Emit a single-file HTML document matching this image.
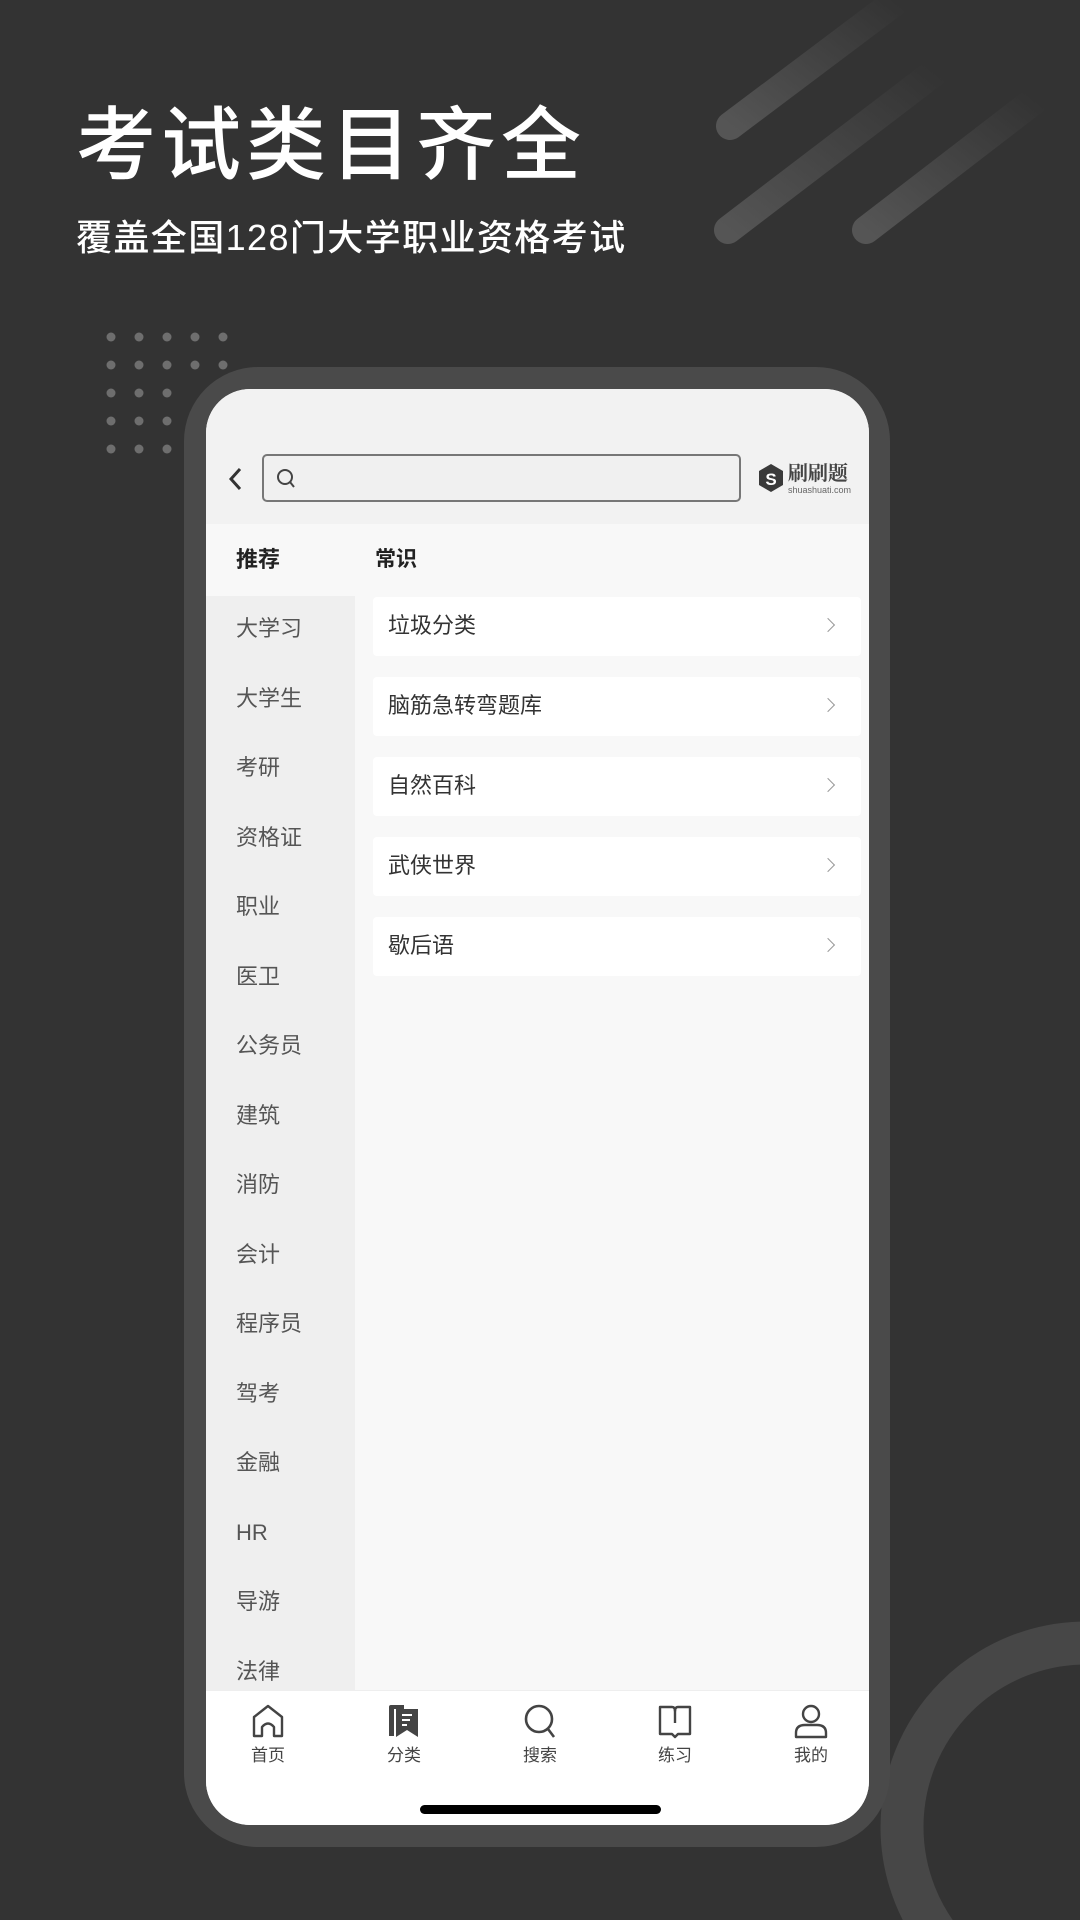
<!DOCTYPE html>
<html><head><meta charset="utf-8"><style>
*{margin:0;padding:0;box-sizing:border-box}
body{width:1080px;height:1920px;background:#333;position:relative;overflow:hidden;font-family:"Liberation Sans","Noto Sans CJK SC",sans-serif}
.abs{position:absolute}
.t1{left:76px;top:96px;font-size:80px;color:#fff;letter-spacing:5px;line-height:100px;font-weight:500}
.t2{left:76px;top:214px;font-size:36px;color:#fff;letter-spacing:1.4px;line-height:48px;font-weight:500}
.frame{left:184px;top:367px;width:706px;height:1480px;background:#4a4a4a;border-radius:74px}
.screen{left:206px;top:389px;width:663px;height:1436px;background:#f8f8f8;border-radius:44px;overflow:hidden}
.top{left:0;top:0;width:663px;height:135px;background:#f2f2f2}
.search{left:56px;top:65px;width:479px;height:48px;border:2px solid #777;border-radius:5px;background:#f0f0f0}
.side{left:0;top:135px;width:149px;height:1167px;background:#efefef}
.si{position:absolute;left:30px;font-size:22px;color:#555;line-height:30px}
.card{position:absolute;left:167px;width:488px;height:59px;background:#fff;border-radius:4px}
.card span{position:absolute;left:15px;top:14px;font-size:22px;color:#333;line-height:30px}
.card i{position:absolute;right:28px;top:23px;width:10px;height:10px;border-top:1.5px solid #999;border-right:1.5px solid #999;transform:rotate(45deg)}
.tab{left:0;top:1301px;width:663px;height:135px;background:#fff;border-top:1px solid #eee}
.tb{position:absolute;top:0;width:100px;text-align:center;font-size:17px;color:#444}
.tb svg{display:block;margin:12px auto 2px}
</style></head><body>
<svg class="abs" style="left:0;top:0" width="1080" height="480">
<defs>
<linearGradient id="g1" x1="0" y1="1" x2="1" y2="0"><stop offset="0" stop-color="#555"/><stop offset="1" stop-color="#333"/></linearGradient>
</defs>
<g stroke="url(#g1)" stroke-width="28" stroke-linecap="round" fill="none">
<line x1="730" y1="126" x2="895" y2="2"/>
<line x1="728" y1="230" x2="935" y2="72"/>
<line x1="866" y1="230" x2="1035" y2="100"/>
</g>
<g fill="#6e6e6e">
<circle cx="111" cy="337" r="4.5"/><circle cx="139" cy="337" r="4.5"/><circle cx="167" cy="337" r="4.5"/><circle cx="195" cy="337" r="4.5"/><circle cx="223" cy="337" r="4.5"/>
<circle cx="111" cy="365" r="4.5"/><circle cx="139" cy="365" r="4.5"/><circle cx="167" cy="365" r="4.5"/><circle cx="195" cy="365" r="4.5"/><circle cx="223" cy="365" r="4.5"/>
<circle cx="111" cy="393" r="4.5"/><circle cx="139" cy="393" r="4.5"/><circle cx="167" cy="393" r="4.5"/>
<circle cx="111" cy="421" r="4.5"/><circle cx="139" cy="421" r="4.5"/><circle cx="167" cy="421" r="4.5"/>
<circle cx="111" cy="449" r="4.5"/><circle cx="139" cy="449" r="4.5"/><circle cx="167" cy="449" r="4.5"/>
</g>
</svg>
<svg class="abs" style="left:0;top:1500px" width="1080" height="420"><circle cx="1086" cy="327" r="184" fill="none" stroke="#474747" stroke-width="43"/></svg>
<div class="abs t1">考试类目齐全</div>
<div class="abs t2">覆盖全国128门大学职业资格考试</div>
<div class="abs frame"></div>
<div class="abs screen">
 <div class="abs top"></div>
 <svg class="abs" style="left:20px;top:76px" width="20" height="28"><path d="M14 4 L5 14 L14 24" stroke="#333" stroke-width="3" fill="none"/></svg>
 <div class="abs search"><svg class="abs" style="left:12px;top:12px" width="22" height="22"><circle cx="9" cy="9" r="7" stroke="#444" stroke-width="2" fill="none"/><path d="M14 14 L18 19" stroke="#444" stroke-width="2"/></svg></div>
 <svg class="abs" style="left:551px;top:74px" width="28" height="30"><path d="M14 1 L26 8 L26 22 L14 29 L2 22 L2 8Z" fill="#3a3a3a"/><text x="14" y="22" font-size="17" font-weight="bold" fill="#fff" text-anchor="middle" font-family="Liberation Sans">S</text></svg>
 <div class="abs" style="left:582px;top:72px;font-size:20px;color:#444;line-height:22px;font-family:'Noto Serif CJK SC',serif;font-weight:bold">刷刷题</div>
 <div class="abs" style="left:582px;top:96px;font-size:9px;color:#666;line-height:10px">shuashuati.com</div>
 <div class="abs side"></div>
 <div class="abs" style="left:0;top:135px;width:149px;height:72px;background:#f8f8f8"></div>
 <div class="si" style="top:156px;color:#222;font-weight:bold">推荐</div>
 <div class="si" style="left:169px;top:156px;color:#222;font-weight:bold;font-size:21px">常识</div>
 <div class="si" style="top:225px">大学习</div>
 <div class="si" style="top:295px">大学生</div>
 <div class="si" style="top:364px">考研</div>
 <div class="si" style="top:434px">资格证</div>
 <div class="si" style="top:503px">职业</div>
 <div class="si" style="top:573px">医卫</div>
 <div class="si" style="top:642px">公务员</div>
 <div class="si" style="top:712px">建筑</div>
 <div class="si" style="top:781px">消防</div>
 <div class="si" style="top:851px">会计</div>
 <div class="si" style="top:920px">程序员</div>
 <div class="si" style="top:990px">驾考</div>
 <div class="si" style="top:1059px">金融</div>
 <div class="si" style="top:1129px">HR</div>
 <div class="si" style="top:1198px">导游</div>
 <div class="si" style="top:1268px">法律</div>
 <div class="card" style="top:208px"><span>垃圾分类</span><i></i></div>
 <div class="card" style="top:288px"><span>脑筋急转弯题库</span><i></i></div>
 <div class="card" style="top:368px"><span>自然百科</span><i></i></div>
 <div class="card" style="top:448px"><span>武侠世界</span><i></i></div>
 <div class="card" style="top:528px"><span>歇后语</span><i></i></div>
 <div class="abs tab">
  <div class="tb" style="left:12px"><svg width="36" height="36"><path d="M4 33 L4 14 L18 3 L32 14 L32 33 L24 33 L24 24 Q18 17 12 24 L12 33Z" stroke="#444" stroke-width="2.4" fill="none" stroke-linejoin="round"/></svg>首页</div>
  <div class="tb" style="left:148px"><svg width="36" height="36"><path d="M3 4 Q3 2 5 2 L18 2 L18 6 L8 6 L8 33 L3 33Z" fill="#444"/><path d="M10 6 L32 6 L32 34 L21 27 L10 34Z" fill="#444"/><path d="M16 12 L26 12 M16 17 L24 17 M16 22 L21 22" stroke="#fff" stroke-width="2"/></svg>分类</div>
  <div class="tb" style="left:284px"><svg width="36" height="36"><circle cx="17" cy="16" r="13" stroke="#444" stroke-width="2.6" fill="none"/><path d="M26 26 L32 34" stroke="#444" stroke-width="2.6"/></svg>搜索</div>
  <div class="tb" style="left:419px"><svg width="36" height="36"><path d="M3 4 L15 4 Q18 4 18 8 Q18 4 21 4 L33 4 L33 31 L21 31 L18 34 L15 31 L3 31Z" stroke="#444" stroke-width="2.4" fill="none" stroke-linejoin="round"/><path d="M18 7 L18 20" stroke="#444" stroke-width="2.4"/></svg>练习</div>
  <div class="tb" style="left:555px"><svg width="36" height="36"><circle cx="18" cy="11" r="8" stroke="#444" stroke-width="2.4" fill="none"/><path d="M3 34 L3 30 Q3 22 12 22 L24 22 Q33 22 33 30 L33 34Z" stroke="#444" stroke-width="2.4" fill="none" stroke-linejoin="round"/></svg>我的</div>
  <div class="abs" style="left:214px;top:114px;width:241px;height:9px;background:#000;border-radius:5px"></div>
 </div>
</div>
</body></html>
